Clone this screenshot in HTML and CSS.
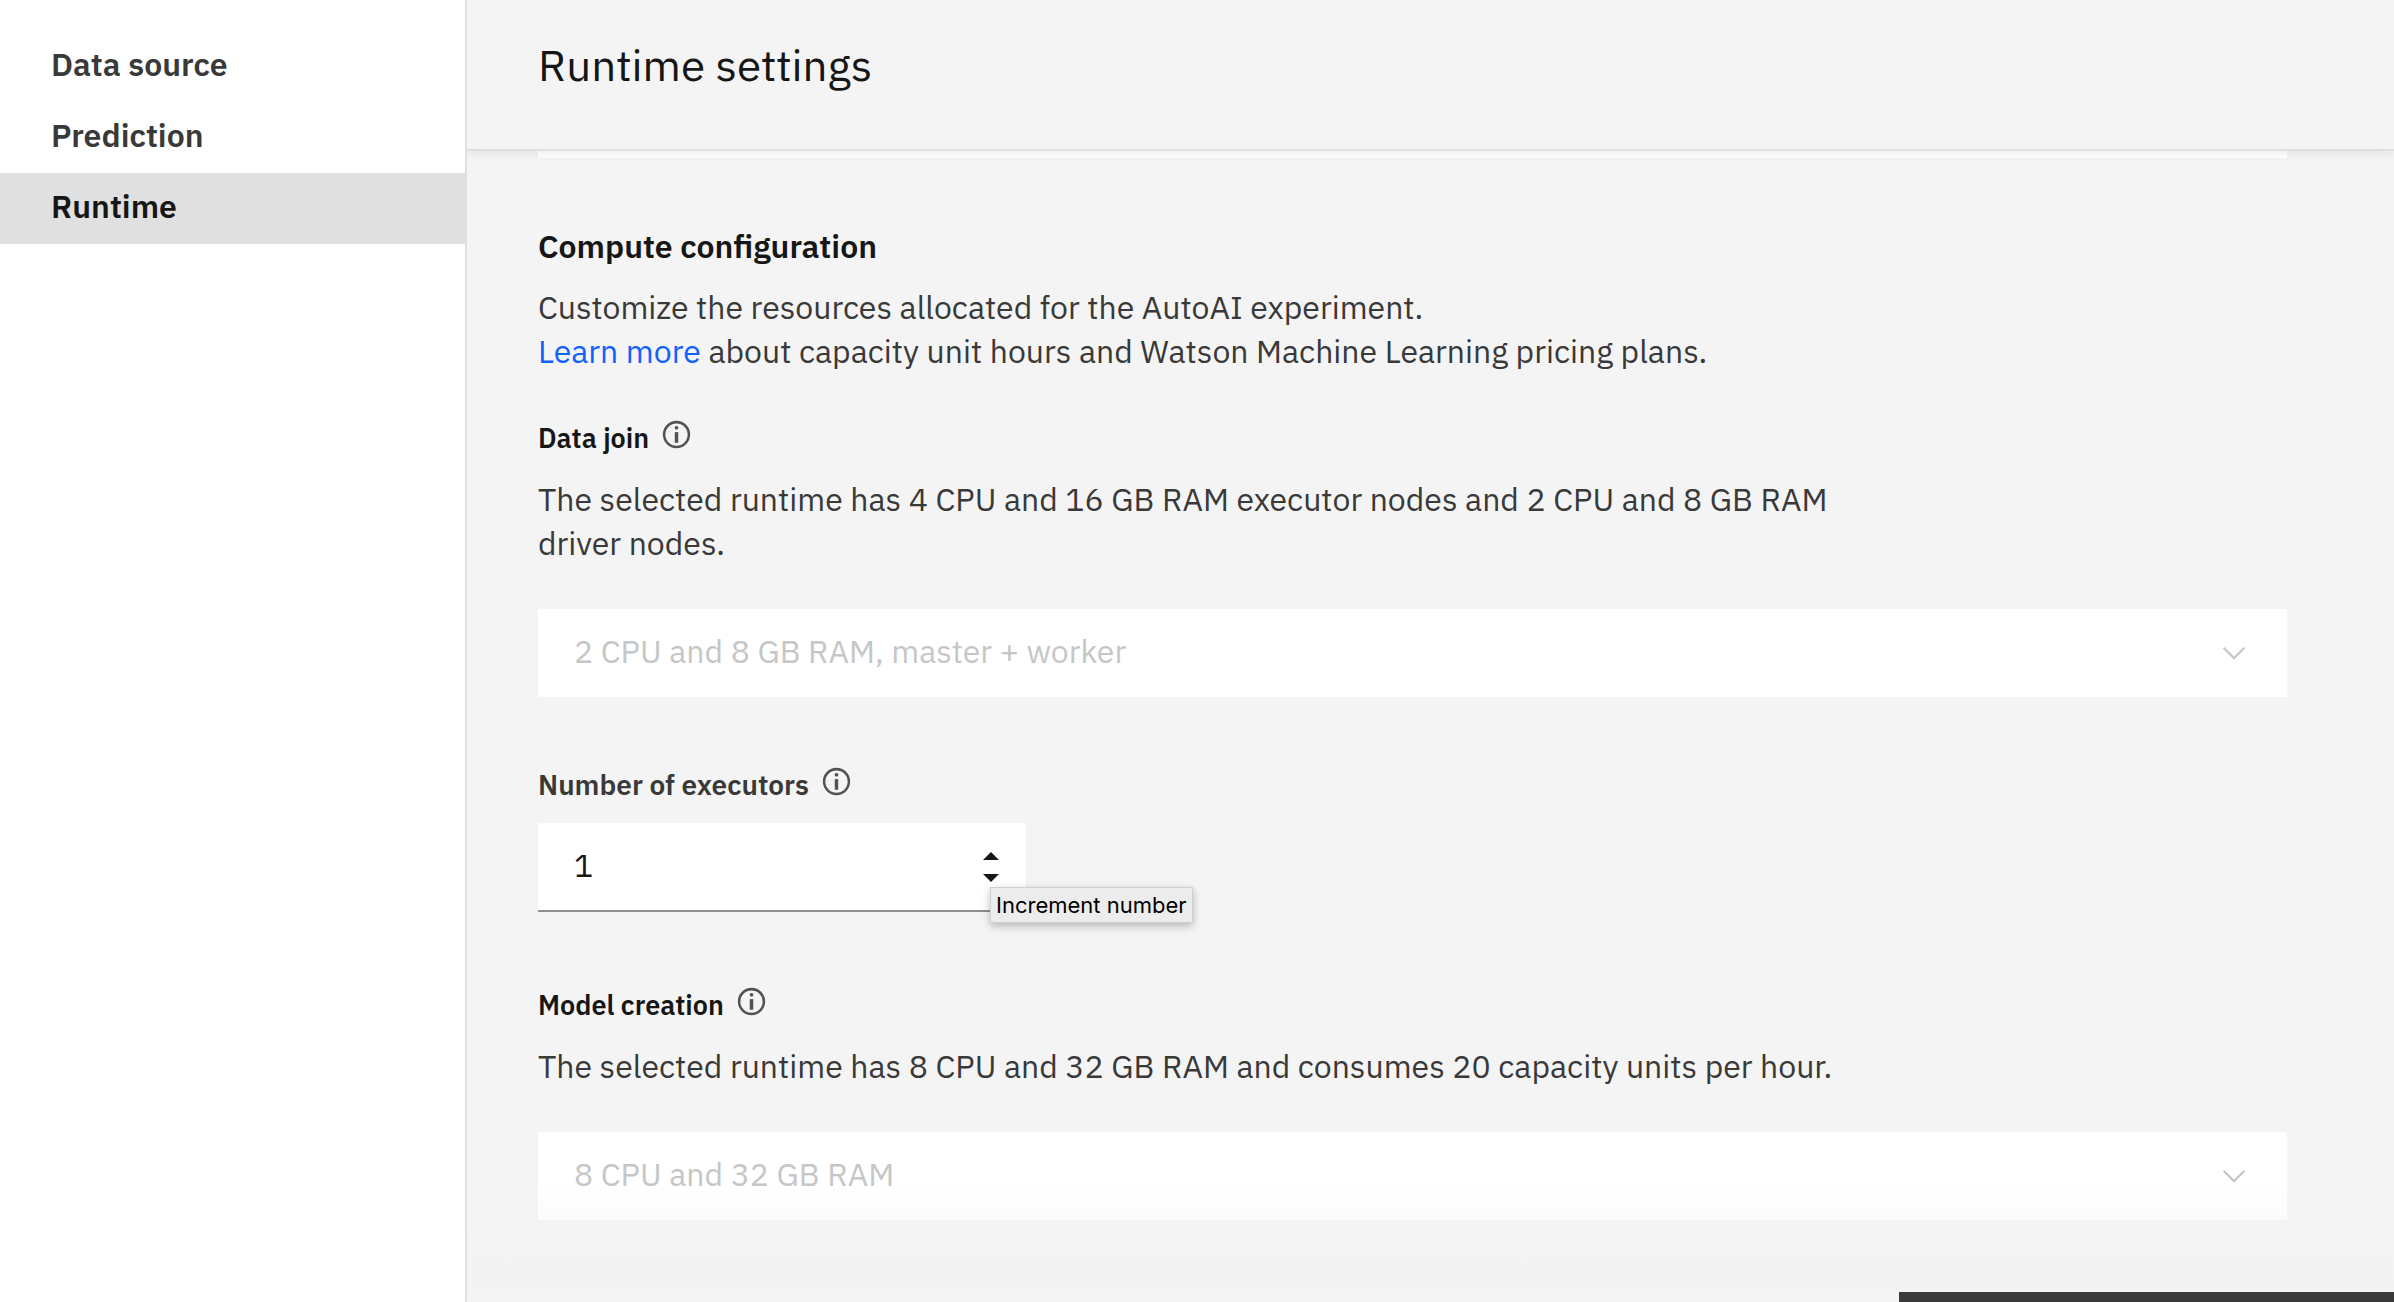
FILE: index.html
```html
<!DOCTYPE html>
<html lang="en">
<head>
<meta charset="utf-8">
<meta name="viewport" content="width=device-width, initial-scale=1">
<title>Runtime settings</title>
<link rel="stylesheet" href="styles.css">
</head>
<body>
<svg class="sprite" aria-hidden="true">
  <symbol id="info" viewBox="0 0 32 32">
    <circle cx="16" cy="15" r="12.8" fill="none" stroke="currentColor" stroke-width="2.6"/>
    <circle cx="16" cy="8" r="1.9"/>
    <path d="M14.2 12.5h3.6v11h-3.6z"/>
  </symbol>
  <symbol id="chevron" viewBox="0 0 16 16">
    <path d="M8 11 3 6l.7-.7L8 9.6l4.3-4.3.7.7z"/>
  </symbol>
</svg>
<div class="layout">
  <nav class="sidebar">
    <a class="nav-item" href="#data-source">Data source</a>
    <a class="nav-item" href="#prediction">Prediction</a>
    <a class="nav-item nav-item-current" href="#runtime" aria-current="page">Runtime</a>
  </nav>
  <main class="main">
    <header class="header"><h1 class="title">Runtime settings</h1></header>
    <div class="content">
      <div class="previous-card"></div>
      <section class="section">
        <h2 class="heading">Compute configuration</h2>
        <p class="text">Customize the resources allocated for the AutoAI experiment.<br><a class="link" href="#learn-more">Learn more</a> about capacity unit hours and Watson Machine Learning pricing plans.</p>
      </section>
      <section class="group">
        <div class="label-row">
          <label class="label" for="data-join">Data join</label>
          <svg class="info"><use href="#info"/></svg>
        </div>
        <p class="text text-narrow">The selected runtime has 4 CPU and 16 GB RAM executor nodes and 2 CPU and 8 GB RAM driver nodes.</p>
        <div class="select-box">
          <select class="select" id="data-join" disabled><option>2 CPU and 8 GB RAM, master + worker</option></select>
          <svg class="chevron"><use href="#chevron"/></svg>
        </div>
      </section>
      <section class="group-number">
        <div class="label-row">
          <label class="label label-muted" for="executors">Number of executors</label>
          <svg class="info"><use href="#info"/></svg>
        </div>
        <div class="number-box">
          <input class="number" id="executors" type="number" value="1" min="1">
          <div class="steppers">
            <button class="step" type="button" aria-label="Increment number"><svg class="arrow" viewBox="0 0 16 8"><path d="M8 0l8 8H0z"/></svg></button>
            <button class="step" type="button" aria-label="Decrement number"><svg class="arrow" viewBox="0 0 16 8"><path d="M0 0h16L8 8z"/></svg></button>
          </div>
          <div class="tooltip" role="tooltip">Increment number</div>
        </div>
      </section>
      <section class="group-model">
        <div class="label-row">
          <label class="label" for="model-creation">Model creation</label>
          <svg class="info"><use href="#info"/></svg>
        </div>
        <p class="text text-narrow">The selected runtime has 8 CPU and 32 GB RAM and consumes 20 capacity units per hour.</p>
        <div class="select-box">
          <select class="select" id="model-creation" disabled><option>8 CPU and 32 GB RAM</option></select>
          <svg class="chevron"><use href="#chevron"/></svg>
        </div>
      </section>
      <div class="fade"></div>
    </div>
    <footer class="footer"></footer>
  </main>
</div>
</body>
</html>
```

FILE: styles.css
```css
* {
  box-sizing: border-box;
}

body {
  margin: 0;
  background: #f4f4f4;
  color: #393939;
  font-family: "IBM Plex Sans", "Open Sans", sans-serif;
  font-size: 32px;
  line-height: 44px;
}

h1, h2, p {
  margin: 0;
}

.sprite {
  position: absolute;
  width: 0;
  height: 0;
}

.layout {
  display: flex;
  height: 100vh;
}

.sidebar {
  flex: none;
  width: 467px;
  padding-top: 31px;
  background: #fff;
  border-right: 2px solid #e0e0e0;
}

.nav-item {
  display: block;
  padding: 0 51px 5px;
  line-height: 66px;
  font-weight: 600;
  color: #393939;
  text-decoration: none;
}

.nav-item-current {
  background: #e0e0e0;
  color: #161616;
}

.main {
  display: flex;
  flex: 1;
  flex-direction: column;
  min-width: 0;
}

.header {
  z-index: 1;
  flex: none;
  padding: 35px 71px 54px;
  border-bottom: 2px solid #e0e0e0;
  box-shadow: 0 0 12px rgba(0, 0, 0, 0.1);
  clip-path: inset(0 0 -16px 0);
}

.title {
  font-size: 44px;
  line-height: 60px;
  font-weight: 400;
  color: #161616;
}

.content {
  position: relative;
  flex: 1;
  min-height: 0;
  padding: 0 107px 0 71px;
  overflow: hidden;
}

.previous-card {
  height: 7px;
  background: #fff;
}

.section {
  padding-top: 66px;
}

.heading {
  margin-bottom: 17px;
  font-size: 32px;
  line-height: 44px;
  font-weight: 600;
  color: #161616;
}

.link {
  color: #0f62fe;
  text-decoration: none;
}

.group {
  padding-top: 47px;
}

.group-number {
  padding-top: 70px;
}

.group-model {
  padding-top: 75px;
}

.label-row {
  display: flex;
  gap: 12px;
  height: 36px;
}

.label {
  font-size: 27px;
  line-height: 36px;
  font-weight: 600;
  color: #161616;
}

.label-muted {
  font-size: 28px;
  color: #393939;
}

.info {
  width: 31px;
  height: 31px;
  fill: currentColor;
  color: #525252;
}

.text-narrow {
  max-width: 1340px;
  padding: 21px 0 44px;
}

.select-box {
  position: relative;
}

.select {
  display: block;
  width: 100%;
  height: 88px;
  padding: 0 36px 4px;
  border: 0;
  border-radius: 0;
  appearance: none;
  background: #fff;
  color: #c6c6c6;
  font: inherit;
  opacity: 1;
}

.chevron {
  position: absolute;
  top: 26px;
  right: 35px;
  width: 36px;
  height: 36px;
  fill: #c6c6c6;
}

.number-box {
  position: relative;
  display: flex;
  width: 488px;
  height: 89px;
  margin-top: 20px;
  background: #fff;
  border-bottom: 2px solid #8d8d8d;
}

.number {
  flex: 1;
  min-width: 0;
  padding: 0 0 4px 36px;
  border: 0;
  appearance: textfield;
  background: transparent;
  color: #161616;
  font: inherit;
}

.number::-webkit-inner-spin-button {
  appearance: none;
}

.steppers {
  display: flex;
  flex-direction: column;
  justify-content: center;
  width: 70px;
}

.step {
  display: flex;
  align-items: center;
  justify-content: center;
  height: 22px;
  padding: 0;
  border: 0;
  background: none;
}

.arrow {
  width: 16px;
  height: 8px;
  fill: #161616;
}

.tooltip {
  position: absolute;
  top: 64px;
  left: 452px;
  padding: 0 5px;
  background: #ececec;
  border: 1px solid #d0d0d0;
  box-shadow: 0 3px 8px rgba(0, 0, 0, 0.25);
  color: #000;
  font-family: Inter, sans-serif;
  font-size: 22px;
  line-height: 34px;
  white-space: nowrap;
}

.fade {
  position: absolute;
  right: 0;
  bottom: 0;
  left: 0;
  height: 108px;
  background: linear-gradient(rgba(243, 243, 243, 0), #f3f3f3);
  pointer-events: none;
}

.footer {
  flex: none;
  align-self: flex-end;
  width: 495px;
  height: 10px;
  background: #393939;
}
```
